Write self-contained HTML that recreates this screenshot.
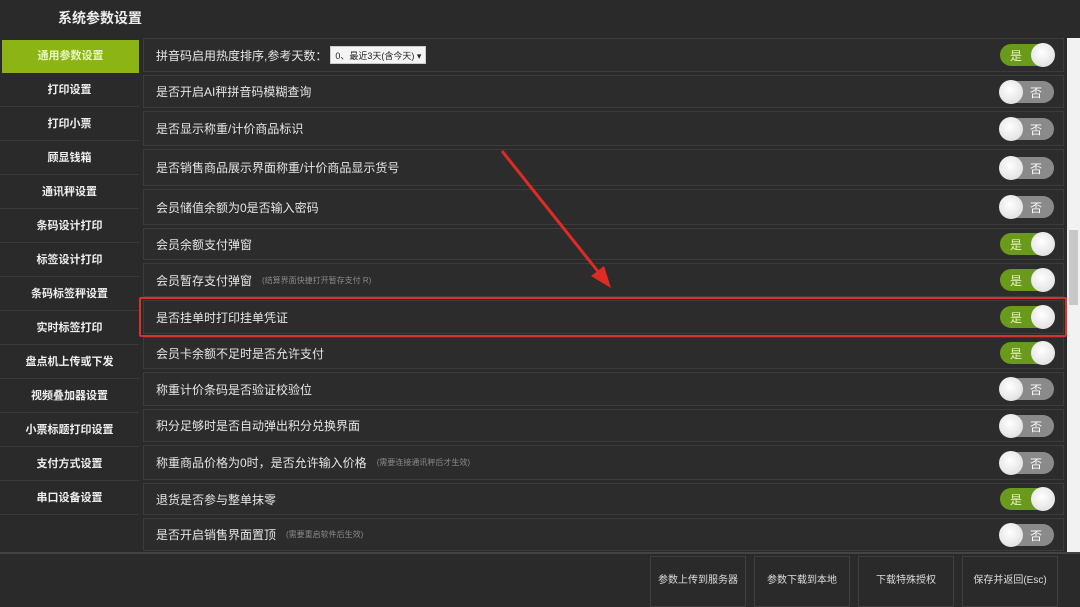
<!DOCTYPE html>
<html><head><meta charset="utf-8"><style>
*{margin:0;padding:0;box-sizing:border-box}
body{width:1080px;height:607px;background:#2a2a2a;font-family:"Liberation Sans","Noto Sans CJK SC",sans-serif;color:#e8e8e8;position:relative;overflow:hidden}
.t{position:absolute;left:58px;top:8px;font-size:14px;font-weight:bold;color:#eee}
.s{position:absolute;left:0;width:139px;height:33px;font-size:11px;font-weight:bold;text-align:center;line-height:33px;border-bottom:1px solid #3a3a3a;color:#eee}
.s.a{background:#8cb414;color:#e8f5c0;border:none;left:2px;width:137px}
.r{position:absolute;left:143px;width:921px;border:1px solid #3c3c3c;background:#2c2c2c;font-size:12px;padding-left:12px;display:flex;align-items:center;color:#e6e6e6}
.r small{font-size:8px;color:#8a8a8a;margin-left:10px}
.tg{position:absolute;right:9px;top:50%;margin-top:-11px;width:54px;height:22px;border-radius:11px}
.on{background:#6a9a1c}
.off{background:#8a8a8a}
.tg span{position:absolute;top:3px;font-size:12px;color:#fff}
.on span{left:10px;color:#e8f5c0}
.off span{right:12px}
.tg i{position:absolute;top:-1px;width:24px;height:24px;border-radius:12px;background:radial-gradient(circle at 45% 40%,#fff,#d8d8d8)}
.on i{right:-1px}.off i{left:-1px}
.sel{display:inline-block;background:#f4f4f4;color:#222;font-size:9px;height:18px;line-height:18px;padding:0 4px;margin-left:3px;border:1px solid #ccc}
.bb{position:absolute;top:556px;height:51px;width:96px;border:1px solid #3e3e3e;font-size:10px;text-align:center;line-height:48px;color:#ddd}
</style></head><body>
<div class="t">系统参数设置</div>
<div class="s a" style="top:40px">通用参数设置</div>
<div class="s" style="top:74px">打印设置</div>
<div class="s" style="top:108px">打印小票</div>
<div class="s" style="top:142px">顾显钱箱</div>
<div class="s" style="top:176px">通讯秤设置</div>
<div class="s" style="top:210px">条码设计打印</div>
<div class="s" style="top:244px">标签设计打印</div>
<div class="s" style="top:278px">条码标签秤设置</div>
<div class="s" style="top:312px">实时标签打印</div>
<div class="s" style="top:346px">盘点机上传或下发</div>
<div class="s" style="top:380px">视频叠加器设置</div>
<div class="s" style="top:414px">小票标题打印设置</div>
<div class="s" style="top:448px">支付方式设置</div>
<div class="s" style="top:482px">串口设备设置</div>

<div class="r" style="top:38px;height:34px">拼音码启用热度排序,参考天数：<span class="sel">0、最近3天(含今天) ▾</span><div class="tg on"><span>是</span><i></i></div></div>
<div class="r" style="top:75px;height:33px">是否开启AI秤拼音码模糊查询<div class="tg off"><span>否</span><i></i></div></div>
<div class="r" style="top:111px;height:35px">是否显示称重/计价商品标识<div class="tg off"><span>否</span><i></i></div></div>
<div class="r" style="top:149px;height:37px">是否销售商品展示界面称重/计价商品显示货号<div class="tg off"><span>否</span><i></i></div></div>
<div class="r" style="top:189px;height:36px">会员储值余额为0是否输入密码<div class="tg off"><span>否</span><i></i></div></div>
<div class="r" style="top:228px;height:32px">会员余额支付弹窗<div class="tg on"><span>是</span><i></i></div></div>
<div class="r" style="top:263px;height:34px">会员暂存支付弹窗<small>(结算界面快捷打开暂存支付 R)</small><div class="tg on"><span>是</span><i></i></div></div>
<div class="r" style="top:300px;height:34px">是否挂单时打印挂单凭证<div class="tg on"><span>是</span><i></i></div></div>
<div class="r" style="top:337px;height:32px">会员卡余额不足时是否允许支付<div class="tg on"><span>是</span><i></i></div></div>
<div class="r" style="top:372px;height:34px">称重计价条码是否验证校验位<div class="tg off"><span>否</span><i></i></div></div>
<div class="r" style="top:409px;height:33px">积分足够时是否自动弹出积分兑换界面<div class="tg off"><span>否</span><i></i></div></div>
<div class="r" style="top:445px;height:35px">称重商品价格为0时，是否允许输入价格<small>(需要连接通讯秤后才生效)</small><div class="tg off"><span>否</span><i></i></div></div>
<div class="r" style="top:483px;height:32px">退货是否参与整单抹零<div class="tg on"><span>是</span><i></i></div></div>
<div class="r" style="top:518px;height:33px">是否开启销售界面置顶<small>(需要重启软件后生效)</small><div class="tg off"><span>否</span><i></i></div></div>

<div style="position:absolute;left:139px;top:297px;width:928px;height:40px;border:2px solid #d8302c;border-radius:2px"></div>
<div style="position:absolute;left:1067px;top:38px;width:13px;height:514px;background:#f2f2f2"></div>
<div style="position:absolute;left:1069px;top:230px;width:9px;height:75px;background:#c8c8c8"></div>
<div style="position:absolute;left:0;top:552px;width:1080px;height:2px;background:#444"></div>
<div class="bb" style="left:650px">参数上传到服务器</div>
<div class="bb" style="left:754px">参数下载到本地</div>
<div class="bb" style="left:858px">下载特殊授权</div>
<div class="bb" style="left:962px">保存并返回(Esc)</div>
<svg style="position:absolute;left:0;top:0" width="1080" height="607"><line x1="502" y1="151" x2="600" y2="274" stroke="#e02a24" stroke-width="3"/><polygon points="611,288 591,276 604,266" fill="#e02a24"/></svg>
</body></html>
